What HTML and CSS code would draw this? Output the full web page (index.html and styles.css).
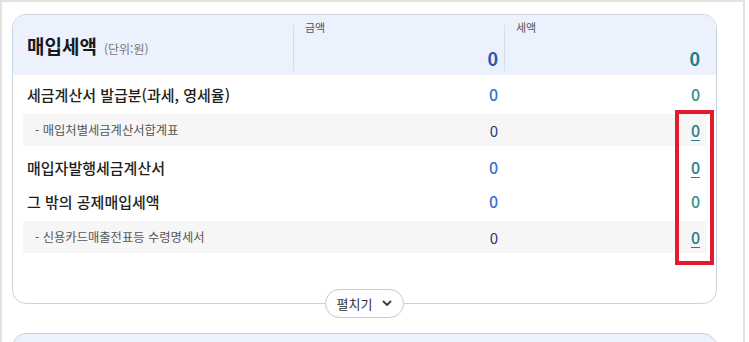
FILE: index.html
```html
<!DOCTYPE html>
<html lang="ko">
<head>
<meta charset="utf-8">
<link rel="stylesheet" href="styles.css">
</head>
<body>
<div class="frame">
  <section class="card">
    <div class="card-head">
      <div class="head-title">
        <span class="title">매입세액</span>
        <span class="unit">(단위:원)</span>
      </div>
      <div class="head-col">
        <span class="head-label">금액</span>
        <span class="head-value amount">0</span>
      </div>
      <div class="head-col">
        <span class="head-label">세액</span>
        <span class="head-value tax">0</span>
      </div>
    </div>
    <div class="card-body">
      <div class="row row-first">
        <span class="row-label">세금계산서 발급분(과세, 영세율)</span>
        <span class="val amount">0</span>
        <span class="val tax">0</span>
      </div>
      <div class="row sub">
        <span class="sub-label">- 매입처별세금계산서합계표</span>
        <span class="val sub-amount">0</span>
        <span class="val tax link">0</span>
      </div>
      <div class="row">
        <span class="row-label">매입자발행세금계산서</span>
        <span class="val amount">0</span>
        <span class="val tax link">0</span>
      </div>
      <div class="row">
        <span class="row-label">그 밖의 공제매입세액</span>
        <span class="val amount">0</span>
        <span class="val tax">0</span>
      </div>
      <div class="row sub">
        <span class="sub-label">- 신용카드매출전표등 수령명세서</span>
        <span class="val sub-amount">0</span>
        <span class="val tax link">0</span>
      </div>
    </div>
    <div class="highlight"></div>
  </section>
  <div class="toggle-wrap">
    <button class="toggle" type="button">펼치기
      <svg width="10" height="7" viewBox="0 0 10 7" aria-hidden="true"><polyline points="1.5,1.5 5,5 8.5,1.5" fill="none" stroke="#444" stroke-width="2" stroke-linecap="round" stroke-linejoin="round"/></svg>
    </button>
  </div>
  <section class="card card-next"></section>
</div>
</body>
</html>
```
FILE: styles.css
```css
* { box-sizing: border-box; }
html, body { margin: 0; padding: 0; background: #fff; }
body {
  font-family: "Noto Sans CJK KR", "Noto Sans", sans-serif;
  color: #222;
  width: 749px;
  height: 342px;
  overflow: hidden;
}
.frame {
  width: 745px;
  height: 342px;
  overflow: hidden;
  border: 2px solid #e2e2e2;
  border-bottom: none;
  padding: 12px 0 0 10px;
}
.card {
  position: relative;
  width: 705px;
  border: 1px solid #c9d3dd;
  border-radius: 14px;
  background: #fff;
}
.card-head {
  display: grid;
  grid-template-columns: 270px 211px 1fr;
  height: 60px;
  padding: 0 10px;
  background: #ebf2fd;
  border-radius: 13px 13px 0 0;
}
.head-title {
  align-self: center;
  display: flex;
  align-items: baseline;
  gap: 7px;
  padding-left: 4px;
  margin-top: 1px;
}
.title { font-size: 19px; font-weight: 700; color: #1a1a1a; }
.unit { font-size: 12px; color: #777; }
.head-col {
  display: flex;
  flex-direction: column;
  margin: 5px 0 4px;
  padding: 0 6px 2px 12px;
  background: linear-gradient(#d6dde6, #d6dde6) left 5px / 1px calc(100% - 5px) no-repeat;
}
.head-label { font-size: 11px; line-height: 14px; color: #555; }
.head-value {
  margin-top: auto;
  align-self: flex-end;
  font-size: 18px;
  line-height: 22px;
  font-weight: 700;
}
.head-value.amount { color: #2f56ad; }
.head-value.tax { color: #1c8186; }
.card-body {
  display: flex;
  flex-direction: column;
  padding: 4px 10px 44px;
}
.row {
  display: grid;
  grid-template-columns: 270px 211px 1fr;
  align-items: center;
  height: 34px;
  padding-bottom: 4px;
}
.row.sub {
  height: 32px;
  padding-bottom: 0;
  background: #f6f6f6;
  margin: 1px 0 6px;
}
.row-label { font-size: 15px; font-weight: 500; color: #1e1e1e; padding-left: 4px; }
.sub-label { font-size: 12.3px; color: #555; padding-left: 12px; }
.val {
  justify-self: end;
  padding-right: 6px;
  font-size: 16px;
  font-weight: 500;
}
.val.amount { color: #3e6fd3; }
.val.sub-amount { color: #253b7c; font-size: 15px; font-weight: 400; }
.val.tax { color: #33918a; }
.val.link {
  color: #2c7e87;
  text-decoration: underline;
  text-underline-offset: 3px;
  text-decoration-thickness: 1px;
}
.highlight {
  position: absolute;
  left: 662px;
  top: 95px;
  width: 39px;
  height: 155px;
  border: 4px solid #e31b2e;
  pointer-events: none;
}
.toggle-wrap {
  display: flex;
  justify-content: center;
  width: 705px;
  margin-top: -15px;
  position: relative;
}
.toggle {
  display: flex;
  align-items: center;
  gap: 10px;
  height: 29px;
  width: 79px;
  padding: 0 0 0 11px;
  border: 1px solid #c8c8c8;
  border-radius: 15px;
  background: #fff;
  font-family: inherit;
  font-size: 13px;
  color: #333;
  margin-left: -1px;
}
.card-next {
  margin-top: 15px;
  height: 60px;
  background: #ebf2fd;
}
```
